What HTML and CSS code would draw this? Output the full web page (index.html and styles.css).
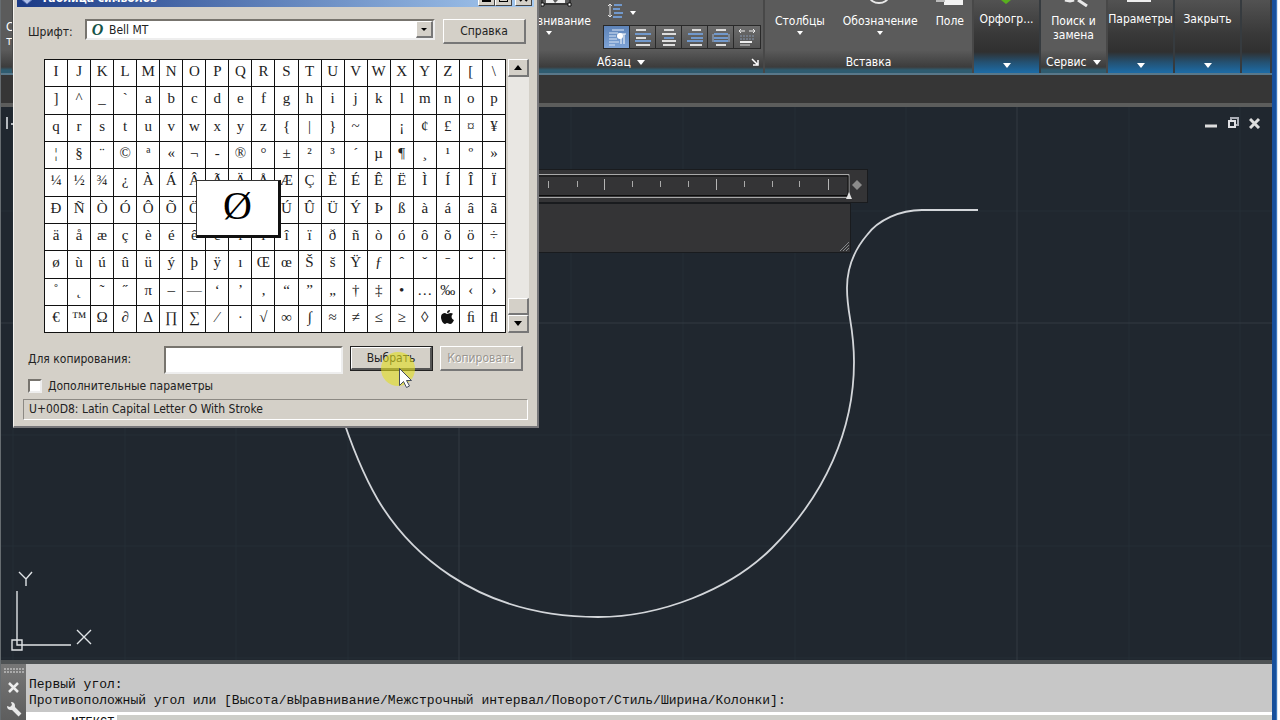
FILE: index.html
```html
<!DOCTYPE html>
<html lang="ru">
<head>
<meta charset="utf-8">
<title>Таблица символов</title>
<link rel="stylesheet" href="styles.css">
</head>
<body>
<div class="app">
  <div class="workspace">
    <header class="ribbon">
      <section class="panel sliver"><span>С</span><span>т</span></section>
      <section class="panel paragraph">
        <div class="para-body">
          <div class="align-group">
            <svg class="crop-icon" width="32" height="7" viewBox="0 0 32 7"><path d="M1 0V4H29V0" fill="none" stroke="#111" stroke-width="1"/><path d="M5 0h7l2 3 3-3h7v3H5z" fill="#eee"/><path d="M0 3h3v3H0zM27 3h3v3h-3z" fill="#fff" stroke="#111"/></svg>
            <button class="tool">Выравнивание<i class="tri small"></i></button>
          </div>
          <div class="para-tools">
            <button class="spacing" aria-label="Межстрочный интервал">
              <svg width="32" height="18" viewBox="0 0 32 18"><path d="M3 2v13M1 4l2-2 2 2M1 13l2 2 2-2" fill="none" stroke="#e4e4e4"/><path d="M7 3h8M6 7h7M7 11h9M6 15h9" stroke="#7198cb" stroke-width="2"/><path d="M23 9h6l-3 4z" fill="#fff"/></svg>
            </button>
            <div class="strip">
              <button class="on" aria-label="По умолчанию"><svg width="20" height="20" viewBox="0 0 20 20"><path d="M5 3h12M2 6h9M2 9h7M2 12h8M2 15h10M2 18h6" stroke="#dbe6f5"/><path d="M12 7h7M14 7v10M17 7v10" stroke="#fff" fill="none"/><circle cx="13" cy="9" r="3" fill="#fff"/></svg></button>
              <button aria-label="По левому краю"><svg width="20" height="20" viewBox="0 0 20 20"><path d="M3 3h10M3 11h10M3 18h14" stroke="#ddd" stroke-width="2"/><path d="M2 7h16M2 14h16" stroke="#7198cb" stroke-width="2"/></svg></button>
              <button aria-label="По центру"><svg width="20" height="20" viewBox="0 0 20 20"><path d="M5 3h10M3 7h14M3 14h14M4 18h12" stroke="#ddd" stroke-width="2"/><path d="M5 11h10" stroke="#7198cb" stroke-width="2"/></svg></button>
              <button aria-label="По правому краю"><svg width="20" height="20" viewBox="0 0 20 20"><path d="M7 3h9M5 18h12" stroke="#ddd" stroke-width="2"/><path d="M3 7h15M6 11h12M2 14h16" stroke="#7198cb" stroke-width="2"/></svg></button>
              <button aria-label="По ширине"><svg width="20" height="20" viewBox="0 0 20 20"><path d="M5 3h10M5 18h10" stroke="#ddd" stroke-width="2"/><path d="M3 7h14M3 11h14M3 14h14" stroke="#7198cb" stroke-width="2"/><path d="M2 7v8M18 7v8" stroke="#9bb5d8"/></svg></button>
              <button aria-label="Распределить"><svg width="20" height="20" viewBox="0 0 20 20"><path d="M2 4h6M12 4h6M4 2L2 4l2 2M16 2l2 2-2 2" stroke="#eee" fill="none"/><path d="M3 15h12" stroke="#eee" stroke-width="2"/><path d="M3 9h14M3 12h14" stroke="#8595ad" stroke-dasharray="2 1"/><path d="M3 18h10" stroke="#ddd"/></svg></button>
            </div>
          </div>
        </div>
        <h2 class="title"><span>Абзац <i class="tri"></i></span><svg class="launcher" width="8" height="8" viewBox="0 0 8 8"><path d="M1 1l5 5M7 2v5H2" fill="none" stroke="#fff" stroke-width="1.5"/></svg></h2>
      </section>
      <section class="panel insert">
        <div class="tools">
          <button class="tool">Столбцы<i class="tri small"></i></button>
          <button class="tool"><svg class="crop-icon" width="26" height="6" viewBox="0 0 26 6"><path d="M4-3a9 6 0 0 0 18 0" fill="none" stroke="#e8e8e8" stroke-width="2"/></svg>Обозначение<i class="tri small"></i></button>
          <button class="tool"><svg class="crop-icon" width="28" height="6" viewBox="0 0 28 6"><path d="M8 0h19v5H8z" fill="#f2f2f2"/><path d="M0 0h9v2H0z" fill="#bbb"/></svg>Поле</button>
        </div>
        <h2 class="title"><span>Вставка</span></h2>
      </section>
      <section class="panel folded spell"><svg class="crop-icon" width="28" height="4" viewBox="0 0 28 4"><path d="M8 0h10l-5 4z" fill="#58b01e"/></svg><button class="tool">Орфогр...</button><i class="tri"></i></section>
      <section class="panel service"><svg class="crop-icon" width="28" height="7" viewBox="0 0 28 7"><path d="M5 0h9l-4 1zM18 0l9 6" stroke="#e8e8e8" stroke-width="3" fill="none"/></svg><button class="tool">Поиск и<br>замена</button><h2 class="title"><span>Сервис <i class="tri"></i></span></h2></section>
      <section class="panel folded"><svg class="crop-icon" width="24" height="3" viewBox="0 0 24 3"><path d="M0 0h24v2H0z" fill="#eee"/></svg><button class="tool">Параметры</button><i class="tri"></i></section>
      <section class="panel folded"><button class="tool">Закрыть</button><i class="tri"></i></section>
      <section class="panel folded rest"></section>
    </header>
    <div class="tabs"></div>
    <main class="canvas">
      <svg class="drawing" width="100%" height="100%" aria-hidden="true">
        <g transform="translate(-1 -107)">
          <path d="M13 107V662M125 107V662M236 107V662M348 107V662M571 107V662M683 107V662M795 107V662M906 107V662M1129 107V662M1240 107V662M0 211H1273M0 435H1273M0 546H1273M0 658H1273" stroke="#252e36"/>
          <path d="M459 107V662M1017 107V662M0 323H1273" stroke="#323b43"/>
          <path d="M340 410C348 435 360 469 378 500C405 545 470 617 598 617C660 617 730 590 772 548C825 495 854 430 854 362C854 325 847 315 847 288C847 266 856 248 867 235C878 220 900 210 922 210H978" fill="none" stroke="#d3d6da" stroke-width="1.8"/>
          <path d="M17 591V645H71M12 640h10v10H12zM19 572l7 7 6-7M26 579v7M77 630l14 14M91 630l-14 14" fill="none" stroke="#dfe3e6" stroke-width="1.4"/>
          <path d="M7 117v12M11 124h3" stroke="#b4b9be" stroke-width="2"/>
        </g>
      </svg>
      <div class="view-buttons">
        <button aria-label="Свернуть"><svg width="12" height="12"><path d="M0 9h12" stroke="#ddd" stroke-width="3"/></svg></button>
        <button aria-label="Восстановить"><svg width="12" height="12"><path d="M4 3V1h7v7H9" fill="none" stroke="#aaadb5" stroke-width="2"/><path d="M2 4h6v6H2z" fill="none" stroke="#e0e0e4" stroke-width="2"/></svg></button>
        <button aria-label="Закрыть"><svg width="12" height="12"><path d="M1 2l9 9M10 2l-9 9" stroke="#ddd" stroke-width="3"/></svg></button>
      </div>
      <div class="mtext">
        <svg class="ruler" width="338" height="34" viewBox="0 0 338 34">
          <path d="M0 0h338v34H0z" fill="#343436" stroke="#191b1e" stroke-width="2"/>
          <path d="M0 5.500H319V28.500H0" fill="none" stroke="#a8a8a8"/>
          <path d="M0 7H318V26.500H0" fill="#343436" stroke="#0c0c0c"/>
          <path d="M18.500 12v7M47.500 12v6M102.500 12v6M130.500 12v6M158.500 12v6M214.500 12v6M242.500 12v6M269.500 12v6" stroke="#aaa"/>
          <path d="M74.500 10v11M186.500 10v11M298.500 10v11" stroke="#b5b5b5"/>
          <path d="M327 11l5 5-5 5-5-5z" fill="#8b8b8b"/><path d="M319 23l3 7h-6z" fill="#e2e2e2"/>
        </svg>
        <div class="mtext-body"><svg width="10" height="10"><path d="M0 9l9-9M3 9l6-6M6 9l3-3" stroke="#85878a"/></svg></div>
      </div>
    </main>
    <footer class="command">
      <div class="grip">
        <svg width="20" height="7"><path d="M0 1h20M0 4h20" stroke="#aaa" stroke-width="2" stroke-dasharray="2 1"/></svg>
        <button aria-label="Закрыть"><svg width="12" height="12"><path d="M1 1l9 9M10 1l-9 9" stroke="#eee" stroke-width="2.500"/></svg></button>
        <button aria-label="Настройка"><svg width="16" height="16"><path d="M6 6l8 8" stroke="#e8e8e8" stroke-width="4"/><path d="M5 1a4 4 0 1 1-4 4l3 1 2-2z" fill="#e8e8e8"/></svg></button>
      </div>
      <div class="console">
        <p>Первый угол:</p>
        <p>Противоположный угол или [Высота/вЫравнивание/Межстрочный интервал/Поворот/Стиль/Ширина/Колонки]:</p>
        <div class="prompt"><label for="cmd">_МТЕКСТ</label><input id="cmd" type="text"></div>
      </div>
    </footer>
  </div>
  <div class="edge"></div>
</div>

<div class="dialog" role="dialog" aria-label="Таблица символов">
  <div class="titlebar">
    <svg width="17" height="14" viewBox="0 0 17 14"><path d="M0 6l8-5 8 5-8 7z" fill="#aebfe8" stroke="#6c83c4"/></svg>
    <span>Таблица символов</span>
    <div class="win"><button aria-label="Свернуть"><b class="min"></b></button><button aria-label="Развернуть"><b></b></button><button class="gap" aria-label="Закрыть"><svg width="9" height="8"><path d="M1 0l7 7M8 0L1 7" stroke="#000" stroke-width="2"/></svg></button></div>
  </div>
  <div class="font-row">
    <label for="font">Шрифт:</label>
    <div class="combo"><em>O</em><select id="font"><option>Bell MT</option></select><i class="drop"><i class="tri"></i></i></div>
    <button class="btn">Справка</button>
  </div>
  <div class="chart">
    <div class="glyphs">
      <table><tbody id="chars"></tbody></table>
      <div class="magnifier">Ø</div>
    </div>
    <div class="scroll"><button aria-label="Вверх"><i class="tri up"></i></button><span class="thumb"></span><button aria-label="Вниз"><i class="tri"></i></button></div>
  </div>
  <div class="copy-row">
    <label for="copy">Для копирования:</label>
    <input id="copy" type="text">
    <button class="btn default">Выбрать</button>
    <button class="btn" disabled>Копировать</button>
  </div>
  <label class="more"><input type="checkbox">Дополнительные параметры</label>
  <div class="status">U+00D8: Latin Capital Letter O With Stroke</div>
  <div class="pointer">
    <svg width="36" height="40" viewBox="0 0 36 40"><circle cx="17" cy="18" r="17" fill="#e3df20" fill-opacity=".6"/><path d="M18.500 17.500v17l4-4 3 6 3-1.500-3-5.500h5z" fill="#fff" stroke="#444c5c"/></svg>
  </div>
</div>
<script src="chars.js"></script>
</body>
</html>
```

FILE: styles.css
```css
* { box-sizing: border-box; }
body { margin: 0; height: 100vh; overflow: hidden; background: #20272f; font: 12px/14px "DejaVu Sans Condensed", "DejaVu Sans", sans-serif; color: #fff; position: relative; }
button { font: inherit; color: inherit; margin: 0; padding: 0; border: 0; background: none; }
svg { display: block; }
.app { display: flex; height: calc(100vh + 12px); }
.workspace { flex: 1; min-width: 0; display: flex; flex-direction: column; border-left: 1px solid #666c70; }
.edge { width: 8px; background: linear-gradient(90deg, #174f9b 0 4px, #3b76bd 4px 5px, #dce6f2 5px 6px, #fff 6px); }

.tri { display: inline-block; border: 4px solid transparent; border-top: 5px solid #fff; border-bottom: 0; }
.tri.small { border-width: 4px 3px 0; }

.ribbon { display: flex; height: 75px; background: #383838; border-bottom: 2px solid #59788a; }
.panel { position: relative; flex: none; display: flex; flex-direction: column; background: linear-gradient(#5b5b5b 0 50px, #3c3c3c 67px, #2f5c70 70px); border-right: 2px solid #484848; }
.crop-icon { position: absolute; top: 0; left: 50%; margin-left: -14px; }
.tool { display: flex; flex-direction: column; align-items: center; position: relative; padding-top: 14px; }
.tool .tri { margin-top: 3px; }
.title { margin: auto 0 0; padding-bottom: 3px; font-size: 12px; line-height: 16px; font-weight: normal; text-align: center; }
.title .tri { margin: 0 0 1px 3px; }
.sliver { width: 13px; padding: 20px 0 0 5px; overflow: hidden; }
.paragraph { flex: 1; align-items: flex-end; }
.para-body { display: flex; }
.align-group { position: relative; padding-right: 12px; }
.para-tools { padding-right: 2px; }
.spacing { display: block; margin: 2px 0 5px 4px; }
.strip { display: flex; border: 1px solid #292929; }
.strip button { width: 26px; height: 22px; display: grid; place-items: center; border-right: 1px solid #292929; background: linear-gradient(#6c6c6c, #535353); }
.strip button:last-child { border-right: 0; }
.strip .on { background: linear-gradient(#5d83b8, #7ea3d6); }
.paragraph .title { width: 166px; padding-right: 4px; display: flex; justify-content: space-between; align-items: center; }
.insert { width: 209px; }
.tools { display: flex; justify-content: space-between; padding: 0 8px 0 10px; }
.folded { width: 67px; align-items: center; background: linear-gradient(#525252, #383838 35px, #303030 52px, #245070 62px, #1d6aa3 72px); border-right: 2px solid #363b3f; }
.folded .tool { padding-top: 12px; }
.folded > .tri { margin: auto 0 5px; }
.service { width: 67px; align-items: center; }
.service .tool { display: block; }
.rest { width: 30px; }
.tabs { height: 32px; background: #363636; border-bottom: 4px solid #5c5d5c; }

.canvas { position: relative; flex: 1; min-height: 0; overflow: hidden; background: #20272f; }
.drawing { position: absolute; inset: 0; }
.view-buttons { position: absolute; top: 10px; right: 11px; display: flex; gap: 10px; }
.mtext { position: absolute; left: 529px; top: 62px; width: 338px; }
.mtext-body { width: 321px; height: 50px; display: flex; align-items: flex-end; justify-content: flex-end; background: #343436; border: 1px solid #191b1e; }

.command { display: flex; background: #c7c7c7; border-top: 4px solid #4e5254; color: #111; font: 13px/16px "Liberation Mono", monospace; }
.grip { width: 25px; display: flex; flex-direction: column; align-items: center; gap: 7px; padding-top: 4px; background: linear-gradient(#777, #585858); }
.console { flex: 1; min-width: 0; padding-top: 13px; }
.console p { margin: 0 0 0 3px; white-space: nowrap; overflow: hidden; }
.prompt { display: flex; margin-top: 3px; border-top: 3px solid #fff; background: #fff; }
.prompt label { width: 91px; padding-left: 38px; white-space: nowrap; font-size: 12px; }
.prompt input { flex: 1; min-width: 0; border: 0; background: #cdcec9; }

.dialog { position: absolute; left: 13px; top: -14px; width: 526px; padding: 2px 3px 6px; background: #d4d0c8; border: 1px solid #f4f2ee; border-right: 2px solid #77777a; border-bottom: 2px solid #77777a; color: #222; }
.titlebar { display: flex; align-items: center; height: 18px; padding: 0 2px; background: linear-gradient(90deg, #1b3a86, #a6caf0); color: #fff; font-weight: bold; gap: 5px; }
.win { margin-left: auto; display: flex; }
.win button { width: 17px; height: 15px; display: grid; place-items: center; background: #d4d0c8; border: 1px solid #fff; border-right-color: #444; border-bottom-color: #444; }
.win b { width: 9px; height: 8px; border: 1px solid #000; border-top-width: 2px; }
.win .min { border-width: 0 0 3px; }
.win .gap { margin-left: 3px; }
.font-row { display: flex; align-items: flex-start; padding: 12px 8px 0 11px; }
.font-row label { width: 57px; padding-top: 6px; }
.combo { flex: 1; display: flex; align-items: stretch; height: 21px; background: #fff; border: 2px solid #77746e; border-right-color: #eee; border-bottom-color: #eee; }
.combo em { width: 21px; text-align: center; font: italic bold 16px/17px "Liberation Serif", serif; color: #175448; }
.combo select { flex: 1; appearance: none; border: 0; padding: 0 1px; background: none; font: inherit; color: #222; }
.drop, .scroll button, .thumb, .btn { background: #d4d0c8; border: 1px solid #fff; border-right: 2px solid #777; border-bottom: 2px solid #777; }
.drop { width: 17px; display: grid; place-items: center; }
.dialog .tri { border-top-color: #000; }
.drop .tri { border-width: 3px 3px 0; }
.dialog .up { border-top: 0; border-bottom: 5px solid #000; }
.btn { width: 83px; height: 25px; color: #222; }
.font-row .btn { margin-left: 8px; }
.chart { display: flex; gap: 2px; padding: 15px 5px 0 27px; }
.glyphs { position: relative; width: 462px; }
table { width: 100%; table-layout: fixed; border-collapse: collapse; background: #fff; }
td { height: 27px; padding: 0 0 5px; border: 1px solid #111; text-align: center; vertical-align: middle; font: 15px/18px "Liberation Serif", "DejaVu Serif", serif; color: #222; }
tr:nth-child(3n + 2) td { height: 28px; }
td svg { margin: auto; }
.magnifier { position: absolute; left: 152px; top: 121px; width: 85px; height: 58px; background: #fff; border: 1px solid #333; border-right: 3px solid #111; border-bottom: 3px solid #111; color: #000; text-align: center; font: 40px/50px "Liberation Serif", serif; }
.scroll { flex: 1; display: flex; flex-direction: column; background: #e9e7e3; }
.scroll button { height: 18px; display: grid; place-items: center; }
.thumb { height: 17px; margin-top: auto; }
.copy-row { display: flex; align-items: flex-start; padding: 13px 11px 0; }
.copy-row label { width: 136px; padding-top: 6px; }
.copy-row input { flex: 1; min-width: 0; height: 28px; border: 2px solid #77746e; border-right-color: #eee; border-bottom-color: #eee; background: #fff; }
.copy-row .default { margin: 0 7px; outline: 1px solid #222; outline-offset: -1px; border: 2px solid #fff; border-right: 3px solid #555; border-bottom: 3px solid #555; }
.btn:disabled { color: #999690; text-shadow: 1px 1px #fff; }
.more { display: flex; align-items: center; gap: 6px; padding: 5px 0 0 11px; }
.more input { appearance: none; width: 14px; height: 14px; margin: 0; background: #fff; border: 2px solid #77746e; border-right-color: #eee; border-bottom-color: #eee; }
.status { margin: 6px 6px 0; height: 21px; padding: 2px 5px; border: 1px solid #8c8983; border-right-color: #fff; border-bottom-color: #fff; }
.pointer { position: absolute; right: 120px; bottom: 35px; pointer-events: none; }
```

FILE: chars.js
```js
const rows = [
  "IJKLMNOPQRSTUVWXYZ[\\",
  "]^_`abcdefghijklmnop",
  "qrstuvwxyz{|}~\u00a0¡¢£¤¥",
  "¦§¨©ª«¬-®°±²³´µ¶¸¹º»",
  "¼½¾¿ÀÁÂÃÄÅÆÇÈÉÊËÌÍÎÏ",
  "ÐÑÒÓÔÕÖ×ØÙÚÛÜÝÞßàáâã",
  "äåæçèéêëìíîïðñòóôõö÷",
  "øùúûüýþÿıŒœŠšŸƒˆˇˉ˘˙",
  "˚˛˜˝π–—‘’‚“”„†‡•…‰‹›",
  "€™Ω∂∆∏∑⁄∙√∞∫≈≠≤≥◊\uf8ffﬁﬂ"
];
const apple = '<svg width="13" height="14" viewBox="0 0 13 14"><path d="M6 4C7 4 8 3 10 3c1 0 2 1 2 1-2 1-2 5 1 6-1 2-2 4-4 4-1 0-2-1-3-1s-1 1-2 1C2 14 0 10 0 7s2-4 4-4l2 1zM6 3c0-2 1-3 3-3 0 2-1 3-3 3z" fill="#111"/></svg>';
const body = document.getElementById("chars");
for (const row of rows) {
  const tr = body.insertRow();
  for (const ch of row) {
    const td = tr.insertCell();
    if (ch === "\uf8ff") td.innerHTML = apple;
    else td.textContent = ch;
  }
}
```
